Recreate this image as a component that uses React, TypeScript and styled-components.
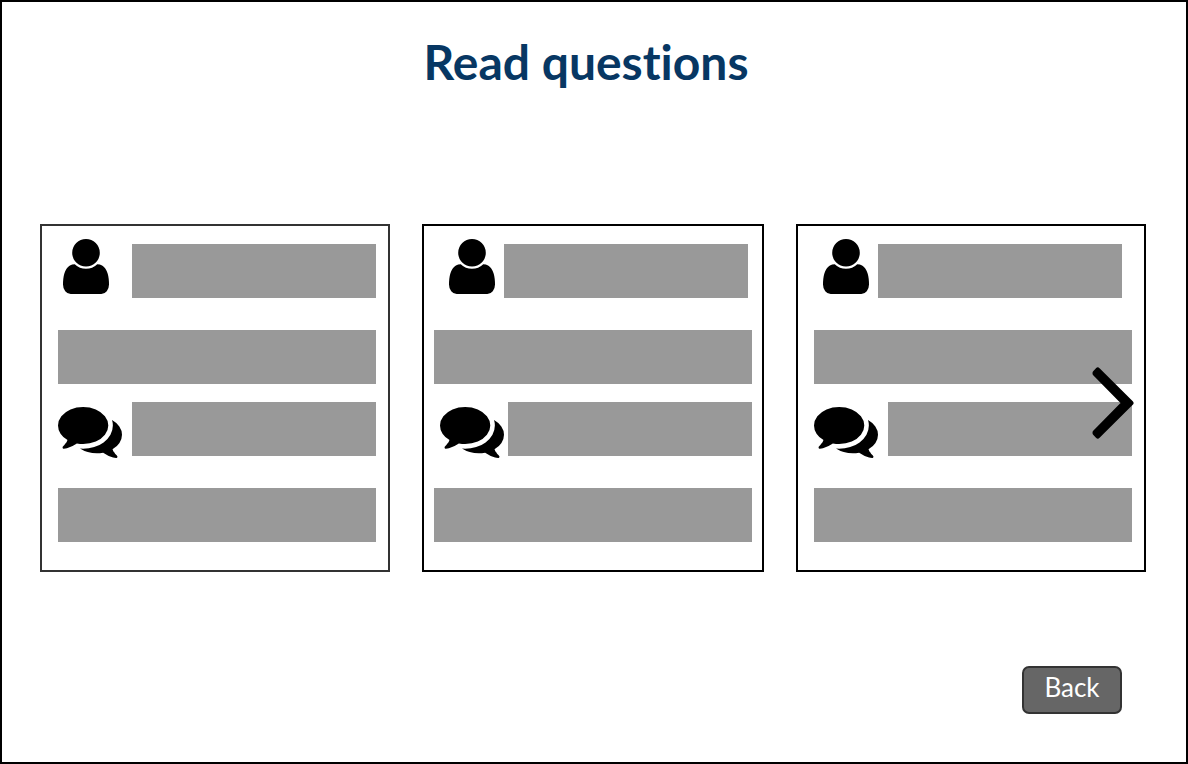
import React from "react";
import styled, { createGlobalStyle } from "styled-components";

const GlobalStyle = createGlobalStyle`
  *, *::before, *::after { box-sizing: border-box; }
  body { margin: 0; background: #fff; font-family: Lato, "Open Sans", sans-serif; }
`;

const Page = styled.main`
  display: flex;
  flex-direction: column;
  min-height: 100vh;
  padding: 32px 40px 48px 38px;
  border: 2px solid #000;
`;

const Title = styled.h1`
  margin: 0 14px 134px 0;
  color: #073763;
  font-size: 48px;
  font-weight: 700;
  font-variant-ligatures: none;
  line-height: 56px;
  text-align: center;
`;

const Carousel = styled.section`
  position: relative;
`;

const Cards = styled.div`
  display: grid;
  grid-template-columns: 350fr 342fr 350fr;
  gap: 32px;
`;

const Card = styled.article<{ $border: string; $padding: string }>`
  padding: ${(p) => p.$padding};
  border: 2px solid ${(p) => p.$border};
`;

const Row = styled.div<{ $padding?: string; $gap?: number; $space?: number }>`
  display: flex;
  align-items: center;
  gap: ${(p) => p.$gap ?? 0}px;
  height: 54px;
  margin-bottom: ${(p) => p.$space ?? 0}px;
  padding: ${(p) => p.$padding ?? "0"};
`;

const Bar = styled.div`
  flex: 1;
  height: 54px;
  background: #999;
`;

const PersonSvg = styled.svg`
  flex: none;
  width: 46px;
  height: 55px;
  margin-bottom: 10px;
`;

const CommentsSvg = styled.svg`
  flex: none;
  width: 64px;
  height: 51px;
  margin-top: 6px;
`;

const NextButton = styled.button`
  position: absolute;
  top: 0;
  bottom: 0;
  right: 12px;
  display: flex;
  align-items: center;
  padding: 10px 0 0;
  border: 0;
  background: none;
  color: #000;
  cursor: pointer;
`;

const Footer = styled.footer`
  display: flex;
  justify-content: flex-end;
  margin-top: auto;
  padding-right: 24px;
`;

const BackButton = styled.button`
  width: 100px;
  height: 48px;
  padding: 0 0 6px;
  border: 2px solid #333;
  border-radius: 7px;
  background: #666;
  color: #fff;
  font-family: inherit;
  font-size: 26px;
  line-height: 32px;
  cursor: pointer;
`;

const PersonIcon = () => (
  <PersonSvg viewBox="256 128 1280 1536" preserveAspectRatio="none" aria-hidden="true">
    <path d="M1536 1399q0 109-62.5 187t-150.5 78h-854q-88 0-150.5-78t-62.5-187q0-85 8.5-160.5t31.5-152 58.5-131 94-89 134.5-34.5q131 128 313 128t313-128q76 0 134.5 34.5t94 89 58.5 131 31.5 152 8.5 160.5zm-256-887q0 159-112.5 271.5t-271.5 112.5-271.5-112.5-112.5-271.5 112.5-271.5 271.5-112.5 271.5 112.5 112.5 271.5z" />
  </PersonSvg>
);

const CommentsIcon = () => (
  <CommentsSvg viewBox="0 256 1792 1408" preserveAspectRatio="none" aria-hidden="true">
    <path d="M1408 768q0 139-94 257t-256.5 186.5-353.5 68.5q-86 0-176-16-124 88-278 128-36 9-86 16h-3q-11 0-20.5-8t-11.5-21q-1-3-1-6.5t.5-6.5 2-6l2.5-5 3.5-5.5 4-5 4.5-5 4-4.5q5-6 23-25t26-29.5 22.5-29 25-38.5 20.5-44q-124-72-195-177t-71-224q0-139 94-257t256.5-186.5 353.5-68.5 353.5 68.5 256.5 186.5 94 257zm384 256q0 120-71 224.5t-195 176.5q10 24 20.5 44t25 38.5 22.5 29 26 29.5 23 25q1 1 4 4.5t4.5 5 4 5 3.5 5.5l2.5 5 2 6 .5 6.5-1 6.5q-3 14-13 22t-22 7q-50-7-86-16-154-40-278-128-90 16-176 16-271 0-472-132 58 4 88 4 161 0 309-45t264-129q125-92 192-212t67-254q0-77-23-152 129 71 204 178t75 230z" />
  </CommentsSvg>
);

const ChevronIcon = () => (
  <svg width="42" height="72" viewBox="0 0 42 72" aria-hidden="true">
    <path
      d="M5.8 3 L39 36 L5.8 69 L3 66 L3 65.5 L32 36 L3 6.5 L3 6 Z"
      fill="currentColor"
      stroke="currentColor"
      strokeWidth="5"
      strokeLinejoin="round"
    />
  </svg>
);

interface CardSpec {
  border: string;
  padding: string;
  person: { padding: string; gap: number };
  comments: { padding: string; gap: number };
}

const cards: CardSpec[] = [
  {
    border: "#333",
    padding: "18px 12px 28px 16px",
    person: { padding: "0 0 0 5px", gap: 23 },
    comments: { padding: "0", gap: 10 },
  },
  {
    border: "#000",
    padding: "18px 10px 28px 10px",
    person: { padding: "0 4px 0 15px", gap: 9 },
    comments: { padding: "0 0 0 6px", gap: 4 },
  },
  {
    border: "#000",
    padding: "18px 12px 28px 16px",
    person: { padding: "0 10px 0 9px", gap: 9 },
    comments: { padding: "0", gap: 10 },
  },
];

export default function App() {
  return (
    <>
      <GlobalStyle />
      <Page>
        <Title>Read questions</Title>
        <Carousel aria-label="Questions">
          <Cards>
            {cards.map((card, i) => (
              <Card key={i} $border={card.border} $padding={card.padding}>
                <Row $padding={card.person.padding} $gap={card.person.gap} $space={32}>
                  <PersonIcon />
                  <Bar />
                </Row>
                <Row $space={18}>
                  <Bar />
                </Row>
                <Row $padding={card.comments.padding} $gap={card.comments.gap} $space={32}>
                  <CommentsIcon />
                  <Bar />
                </Row>
                <Row>
                  <Bar />
                </Row>
              </Card>
            ))}
          </Cards>
          <NextButton type="button" aria-label="Next questions">
            <ChevronIcon />
          </NextButton>
        </Carousel>
        <Footer>
          <BackButton type="button">Back</BackButton>
        </Footer>
      </Page>
    </>
  );
}
